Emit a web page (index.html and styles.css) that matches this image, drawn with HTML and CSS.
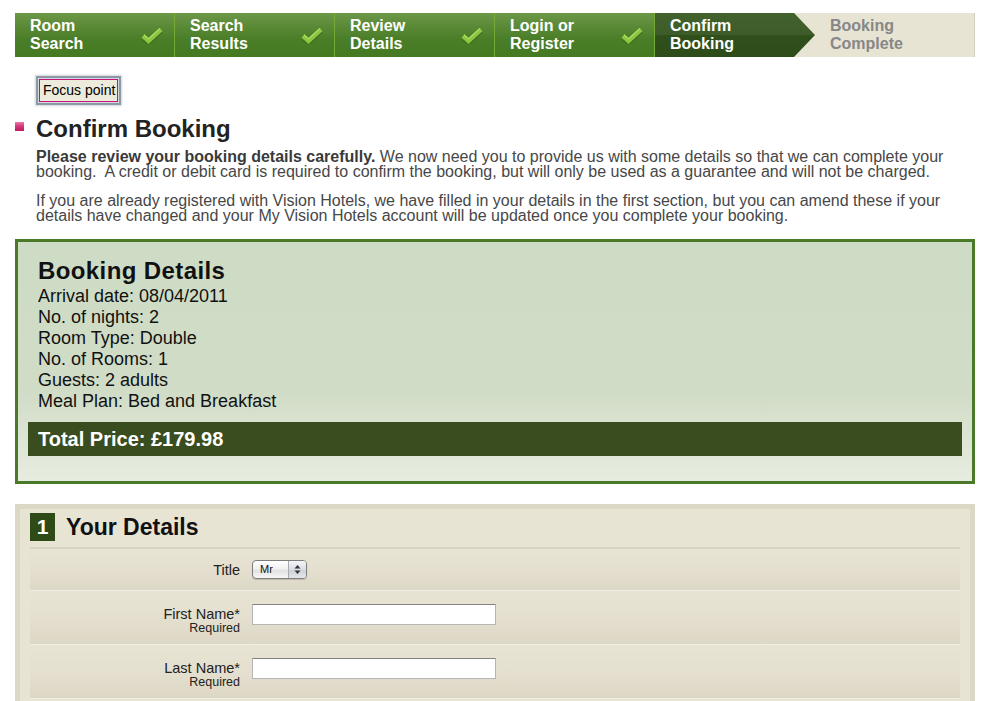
FILE: index.html
```html
<!DOCTYPE html>
<html lang="en">
<head>
<meta charset="utf-8">
<title>Confirm Booking</title>
<link rel="stylesheet" href="styles.css">
</head>
<body>
<div class="page">
  <ol class="steps">
    <li class="step done"><span>Room<br>Search</span><svg class="tick" viewBox="0 0 22 17" width="22" height="17"><polyline points="2,9.5 7.5,14.5 20,3" fill="none" stroke="#3a6a1a" stroke-width="4.5" transform="translate(0,1)"/><polyline points="2,9 7.5,14 20,2.5" fill="none" stroke="#8dc63f" stroke-width="4.5"/><polyline points="3,8 7.5,12 19,1.6" fill="none" stroke="#aedb68" stroke-width="1.2"/></svg></li>
    <li class="step done"><span>Search<br>Results</span><svg class="tick" viewBox="0 0 22 17" width="22" height="17"><polyline points="2,9.5 7.5,14.5 20,3" fill="none" stroke="#3a6a1a" stroke-width="4.5" transform="translate(0,1)"/><polyline points="2,9 7.5,14 20,2.5" fill="none" stroke="#8dc63f" stroke-width="4.5"/><polyline points="3,8 7.5,12 19,1.6" fill="none" stroke="#aedb68" stroke-width="1.2"/></svg></li>
    <li class="step done"><span>Review<br>Details</span><svg class="tick" viewBox="0 0 22 17" width="22" height="17"><polyline points="2,9.5 7.5,14.5 20,3" fill="none" stroke="#3a6a1a" stroke-width="4.5" transform="translate(0,1)"/><polyline points="2,9 7.5,14 20,2.5" fill="none" stroke="#8dc63f" stroke-width="4.5"/><polyline points="3,8 7.5,12 19,1.6" fill="none" stroke="#aedb68" stroke-width="1.2"/></svg></li>
    <li class="step done"><span>Login or<br>Register</span><svg class="tick" viewBox="0 0 22 17" width="22" height="17"><polyline points="2,9.5 7.5,14.5 20,3" fill="none" stroke="#3a6a1a" stroke-width="4.5" transform="translate(0,1)"/><polyline points="2,9 7.5,14 20,2.5" fill="none" stroke="#8dc63f" stroke-width="4.5"/><polyline points="3,8 7.5,12 19,1.6" fill="none" stroke="#aedb68" stroke-width="1.2"/></svg></li>
    <li class="step current"><span>Confirm<br>Booking</span></li>
    <li class="step todo"><span>Booking<br>Complete</span></li>
  </ol>

  <div class="focus-wrap"><button class="focus-btn" type="button">Focus point</button></div>

  <div class="title-row">
    <span class="bullet"></span>
    <h1 class="page-title">Confirm Booking</h1>
  </div>

  <div class="intro">
    <p><strong>Please review your booking details carefully.</strong> We now need you to provide us with some details so that we can complete your booking.&nbsp; A credit or debit card is required to confirm the booking, but will only be used as a guarantee and will not be charged.</p>
    <p>If you are already registered with Vision Hotels, we have filled in your details in the first section, but you can amend these if your details have changed and your My Vision Hotels account will be updated once you complete your booking.</p>
  </div>

  <section class="booking">
    <h2 class="booking-title">Booking Details</h2>
    <ul class="booking-list">
      <li>Arrival date: 08/04/2011</li>
      <li>No. of nights: 2</li>
      <li>Room Type: Double</li>
      <li>No. of Rooms: 1</li>
      <li>Guests: 2 adults</li>
      <li>Meal Plan: Bed and Breakfast</li>
    </ul>
    <div class="total">Total Price: £179.98</div>
  </section>

  <section class="details">
    <div class="details-inner">
      <div class="details-head">
        <span class="num">1</span>
        <h2 class="details-title">Your Details</h2>
      </div>
      <div class="row row-center">
        <label class="lbl">Title</label>
        <div class="select"><span class="select-val">Mr</span><span class="select-arrows"><svg viewBox="0 0 7 11" width="7" height="11"><polygon points="3.5,1 6.5,4.5 0.5,4.5" fill="#333"/><polygon points="0.5,6.5 6.5,6.5 3.5,10" fill="#333"/></svg></span></div>
      </div>
      <div class="row">
        <label class="lbl">First Name*<small>Required</small></label>
        <input class="txt" type="text">
      </div>
      <div class="row">
        <label class="lbl">Last Name*<small>Required</small></label>
        <input class="txt" type="text">
      </div>
    </div>
  </section>
</div>
</body>
</html>
```

FILE: styles.css
```css
html, body {
  margin: 0;
  padding: 0;
  background: #fff;
}

body {
  font-family: "Liberation Sans", Arial, Helvetica, sans-serif;
  color: #222;
}

.page {
  width: 960px;
  margin-left: 15px;
  padding-top: 13px;
}

/* progress steps */
.steps {
  display: flex;
  list-style: none;
  margin: 0;
  padding: 0;
  height: 44px;
}

.step {
  box-sizing: border-box;
  height: 44px;
  display: flex;
  align-items: center;
  justify-content: space-between;
  padding: 0 11px 0 15px;
  font-weight: bold;
  font-size: 16px;
  line-height: 18px;
  color: #fff;
}

.step.done {
  width: 160px;
  background: linear-gradient(#6c9747, #4a7d27 60%, #447a21);
  border-right: 1px solid #74aa38;
}

.tick {
  display: block;
  margin-top: 1px;
}

.step.current {
  position: relative;
  width: 139px;
  background: linear-gradient(#41612d 0, #3d5c29 50%, #2f4f1b 50%, #2d4c19 100%);
  z-index: 1;
}

.step.current::after {
  content: "";
  position: absolute;
  top: 0;
  left: 100%;
  width: 21px;
  height: 44px;
  background: linear-gradient(#41612d 0, #3d5c29 50%, #2f4f1b 50%, #2d4c19 100%);
  clip-path: polygon(0 0, 100% 50%, 0 100%);
}

.step.todo {
  flex: 1;
  padding-left: 36px;
  background: #e8e4d4;
  color: #878787;
  border-right: 1px solid #d6d1bf;
}

/* focus button */
.focus-wrap {
  padding: 22px 0 0 24px;
  height: 23px;
}

.focus-btn {
  display: block;
  margin: 0;
  padding: 2px 2px 2px 3px;
  border: 1px solid #c8157e;
  background: #ecebdc;
  color: #000;
  font-family: "Liberation Sans", Arial, sans-serif;
  font-size: 14px;
  line-height: 17px;
  border-radius: 0;
  box-shadow: 0 0 0 1px #d3d8dc, 0 0 0 3px #8d99a5, 0 0 2px 4px rgba(150, 160, 170, 0.45);
}

/* title */
.title-row {
  display: flex;
  align-items: flex-start;
  gap: 12px;
  margin-top: 13px;
}

.bullet {
  width: 9px;
  height: 9px;
  margin-top: 7px;
  background: linear-gradient(#ec7aab, #d63a7c 45%, #c01a5c);
  flex: none;
}

.page-title {
  margin: 0;
  font-size: 24px;
  line-height: 28px;
  font-weight: bold;
  color: #222;
}

.intro {
  padding-left: 21px;
  margin-top: 6px;
  color: #474747;
  font-size: 16px;
  line-height: 15px;
}

.intro p {
  margin: 0 0 14px;
}

.intro p:last-child {
  margin-bottom: 0;
}

.intro strong {
  color: #3a3a3a;
}

/* booking details box */
.booking {
  margin-top: 16px;
  border: 3px solid #4a7a29;
  padding: 15px 10px 25px;
  background: linear-gradient(#cfdcc5 0, #d0dcc6 62%, #e7ece0 100%);
  color: #111;
}

.booking-title {
  margin: 0 0 2px 10px;
  font-size: 24px;
  line-height: 27px;
  font-weight: bold;
  letter-spacing: 0.4px;
  color: #111;
}

.booking-list {
  list-style: none;
  margin: 0 0 0 10px;
  padding: 0;
  font-size: 18px;
  line-height: 21px;
}

.total {
  margin-top: 10px;
  height: 34px;
  line-height: 34px;
  padding-left: 10px;
  background: #3a4d1e;
  color: #fff;
  font-weight: bold;
  font-size: 20px;
}

/* your details */
.details {
  margin-top: 20px;
  border: 5px solid #dcd8c6;
  border-bottom: 0;
  background: #e8e4d4;
}

.details-inner {
  padding: 4px 10px 30px;
}

.details-head {
  display: flex;
  align-items: center;
  gap: 11px;
  height: 28px;
  padding-bottom: 6px;
  border-bottom: 2px solid #d8d3c2;
}

.num {
  width: 25px;
  height: 28px;
  background: #2e4a17;
  color: #fff;
  font-weight: bold;
  font-size: 21px;
  line-height: 28px;
  text-align: center;
}

.details-title {
  margin: 0;
  font-size: 23px;
  line-height: 28px;
  font-weight: bold;
  color: #111;
}

.row {
  display: grid;
  grid-template-columns: 210px 1fr;
  column-gap: 12px;
  align-items: start;
  box-sizing: border-box;
  height: 54px;
  padding-top: 13px;
  background: linear-gradient(#e8e4d4, #e4dfce 50%, #ddd7c6);
  border-bottom: 1px solid #f1eee4;
}

.row-center {
  height: 42px;
  padding-top: 0;
  align-items: center;
}

.lbl {
  display: block;
  text-align: right;
  font-size: 14.5px;
  line-height: 16px;
  color: #222;
}

.row:not(.row-center) .lbl {
  padding-top: 2px;
}

.lbl small {
  display: block;
  font-size: 12.5px;
  line-height: 13px;
}

.select {
  display: flex;
  width: 55px;
  height: 19px;
  box-sizing: border-box;
  border: 1px solid #7d7d7d;
  border-radius: 4px;
  overflow: hidden;
  background: linear-gradient(#ffffff, #f1f1f1 45%, #e2e2e2 55%, #f6f6f6);
  box-shadow: 0 1px 1px rgba(0, 0, 0, 0.15);
}

.select-val {
  flex: 1;
  font-size: 11px;
  line-height: 17px;
  padding-left: 7px;
  color: #111;
}

.select-arrows {
  width: 17px;
  display: flex;
  align-items: center;
  justify-content: center;
  border-left: 1px solid #a9a9a9;
  background: linear-gradient(#f3f5f8, #d9dee5 50%, #c9d0d9 51%, #e3e7ec);
}

.txt {
  display: block;
  width: 244px;
  height: 21px;
  box-sizing: border-box;
  margin: 0;
  padding: 1px 3px;
  border: 1px solid #b5b5b5;
  border-top-color: #828282;
  background: #fff;
  font: 13px "Liberation Sans", Arial, sans-serif;
}
```
